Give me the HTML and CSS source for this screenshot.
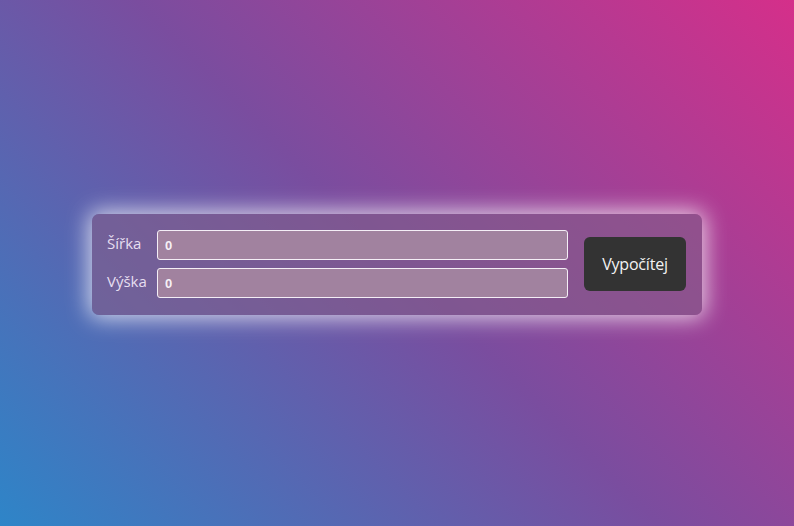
FILE: index.html
```html
<!DOCTYPE html>
<html lang="cs">
<head>
<meta charset="utf-8">
<title>Výpočet</title>
<link rel="stylesheet" href="styles.css">
</head>
<body>
<main class="page">
  <form class="card">
    <div class="fields">
      <div class="row">
        <label class="label" for="w">Šířka</label>
        <input class="input" id="w" type="text" value="0">
      </div>
      <div class="row">
        <label class="label" for="h">Výška</label>
        <input class="input" id="h" type="text" value="0">
      </div>
    </div>
    <button class="btn" type="button">Vypočítej</button>
  </form>
</main>
</body>
</html>
```
FILE: styles.css
```css
html, body {
  margin: 0;
  padding: 0;
  height: 100%;
}
body {
  background: linear-gradient(45deg, #2e85c8 0%, #7a4d9f 50%, #d52f8a 100%);
  font-family: "Open Sans", "Noto Sans", sans-serif;
}
.page {
  height: 100%;
  display: flex;
  align-items: center;
  justify-content: center;
}
.card {
  width: 610px;
  box-sizing: border-box;
  display: flex;
  align-items: center;
  gap: 16px;
  padding: 16px 16px 17px 15px;
  background: rgba(130, 94, 136, 0.6);
  border-radius: 7px;
  box-shadow: 0 0 22px 3px rgba(255, 255, 255, 0.75);
  margin-top: 2px;
}
.fields {
  flex: 1;
  display: flex;
  flex-direction: column;
  gap: 8px;
}
.row {
  display: flex;
  align-items: center;
}
.label {
  width: 50px;
  flex: none;
  font-size: 15px;
  color: #e6def0;
  margin-top: -4px;
}
.input {
  flex: 1;
  height: 30px;
  box-sizing: border-box;
  border: 1px solid #f4eef6;
  border-radius: 3px;
  background: #a1829f;
  color: #f6f0f6;
  font-family: "Liberation Sans", Arial, sans-serif;
  font-weight: bold;
  font-size: 13px;
  padding: 2px 7px 0;
  outline: none;
}
.btn {
  flex: none;
  width: 102px;
  height: 54px;
  border: none;
  border-radius: 6px;
  background: #333333;
  color: #f2f2f2;
  font-family: "Open Sans", "Noto Sans", sans-serif;
  font-size: 16px;
  letter-spacing: -0.2px;
  padding: 0;
}
```
